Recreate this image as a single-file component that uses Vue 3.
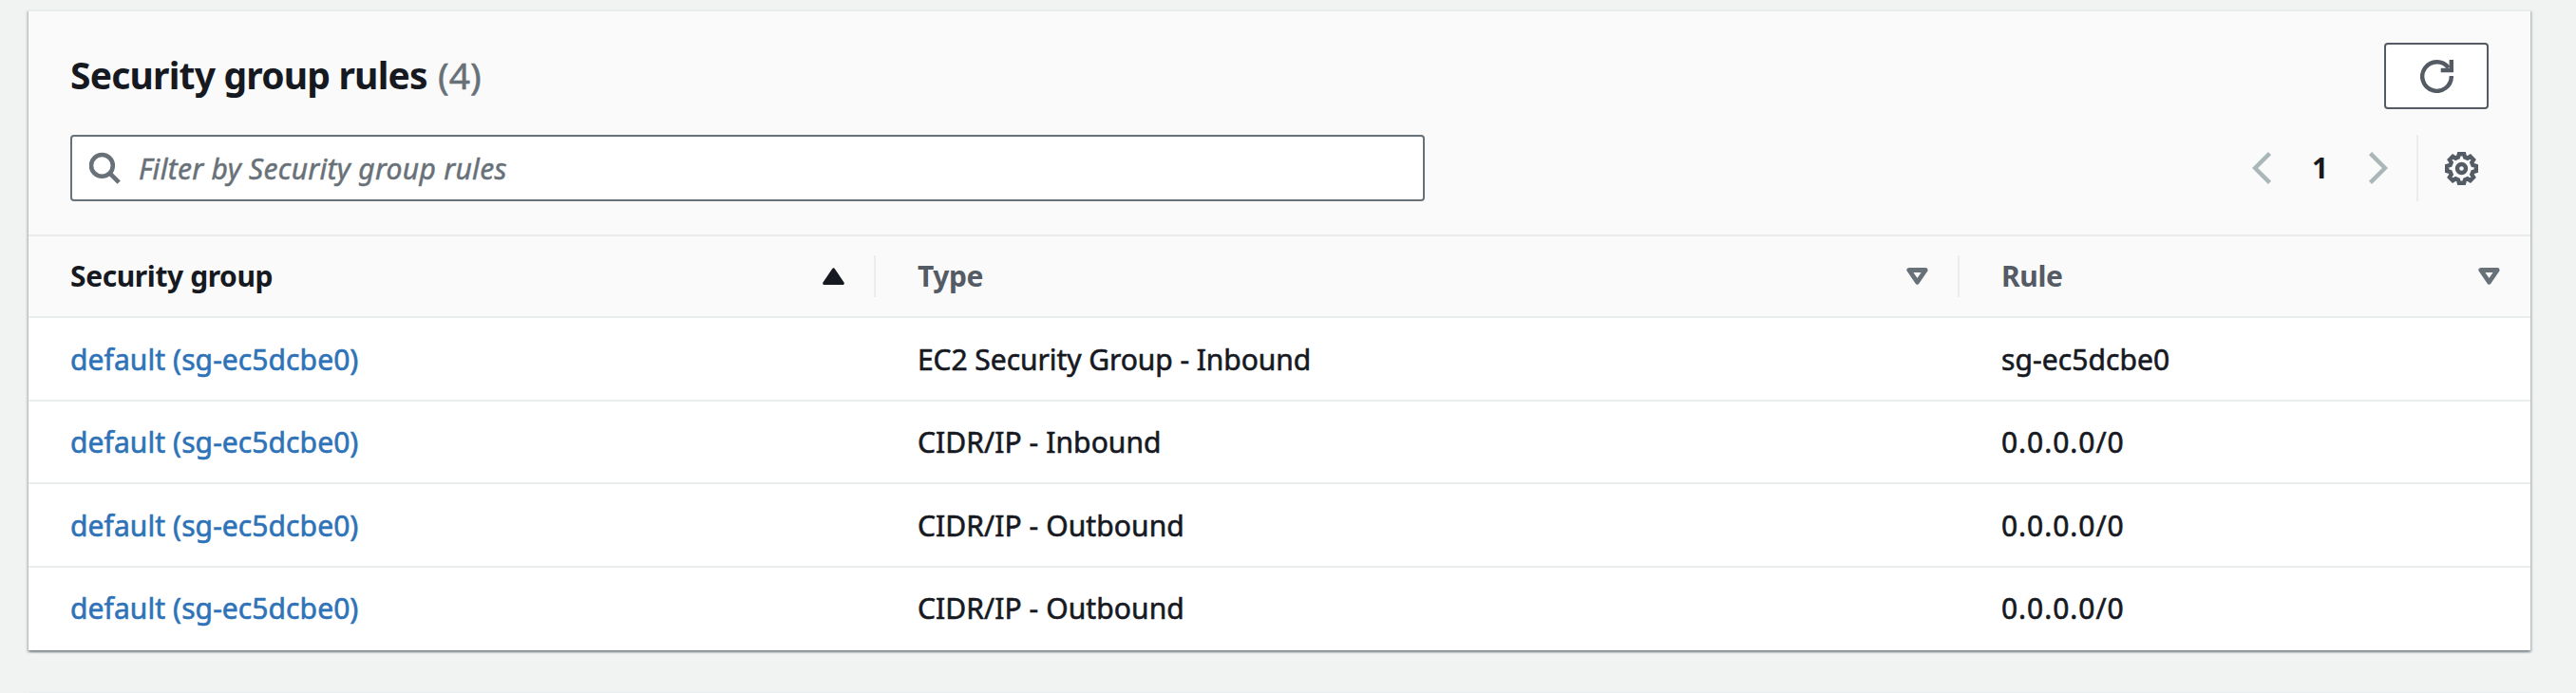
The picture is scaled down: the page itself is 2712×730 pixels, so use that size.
<script setup>
const columns = [
  { id: 'group', label: 'Security group', sorted: true },
  { id: 'type', label: 'Type', sorted: false },
  { id: 'rule', label: 'Rule', sorted: false },
]

const rules = [
  { group: 'default (sg-ec5dcbe0)', type: 'EC2 Security Group - Inbound', rule: 'sg-ec5dcbe0' },
  { group: 'default (sg-ec5dcbe0)', type: 'CIDR/IP - Inbound', rule: '0.0.0.0/0' },
  { group: 'default (sg-ec5dcbe0)', type: 'CIDR/IP - Outbound', rule: '0.0.0.0/0' },
  { group: 'default (sg-ec5dcbe0)', type: 'CIDR/IP - Outbound', rule: '0.0.0.0/0' },
]
</script>

<template>
  <main class="page">
    <section class="card">
      <header class="card-header">
        <div class="title-row">
          <h2 class="title">Security group rules <span class="counter">(4)</span></h2>
          <button class="refresh" type="button" aria-label="Refresh">
            <svg width="35" height="35" viewBox="0 0 35 35" fill="none" stroke="currentColor" stroke-width="4.4">
              <path d="M32.8 17A15.3 15.3 0 1 1 29.8 8.4" />
              <path d="M21.7 11H32.8V0" />
            </svg>
          </button>
        </div>
        <div class="tools-row">
          <label class="filter">
            <svg class="search-icon" width="34" height="34" viewBox="0 0 34 34" fill="none" stroke="currentColor" stroke-width="4.6">
              <circle cx="13.4" cy="14.4" r="11.4" />
              <path d="M21.2 22.2L31.2 32.2" />
            </svg>
            <span class="placeholder">Filter by Security group rules</span>
          </label>
          <nav class="pagination">
            <svg width="21" height="34" viewBox="0 0 21 34" fill="none" stroke="currentColor" stroke-width="4.4">
              <path d="M18.5 1.6L3.1 17L18.5 32.4" />
            </svg>
            <span class="page-number">1</span>
            <svg width="21" height="34" viewBox="0 0 21 34" fill="none" stroke="currentColor" stroke-width="4.4">
              <path d="M2.5 1.6L17.9 17L2.5 32.4" />
            </svg>
          </nav>
          <div class="settings">
            <svg width="35" height="35" viewBox="-17.5 -17.5 35 35" fill="none" stroke="currentColor" stroke-width="4.4" stroke-linejoin="miter">
              <path d="M-2.6 -15.3H2.6L3.6 -11.9L6.3 -10.8L9.2 -12.6L12.6 -9.2L10.8 -6.3L11.9 -3.6L15.3 -2.6V2.6L11.9 3.6L10.8 6.3L12.6 9.2L9.2 12.6L6.3 10.8L3.6 11.9L2.6 15.3H-2.6L-3.6 11.9L-6.3 10.8L-9.2 12.6L-12.6 9.2L-10.8 6.3L-11.9 3.6L-15.3 2.6V-2.6L-11.9 -3.6L-10.8 -6.3L-12.6 -9.2L-9.2 -12.6L-6.3 -10.8L-3.6 -11.9Z" />
              <circle r="4.5" />
            </svg>
          </div>
        </div>
      </header>

      <div class="grid head">
        <div v-for="c in columns" :key="c.id" class="head-cell" :class="{ sorted: c.sorted }">
          <span>{{ c.label }}</span>
          <svg v-if="c.sorted" width="23" height="18" viewBox="0 0 23 18" fill="currentColor" stroke="currentColor" stroke-width="3" stroke-linejoin="round">
            <path d="M11.5 1.8L21.3 16.4H1.7Z" />
          </svg>
          <svg v-else width="23" height="18" viewBox="0 0 23 18" fill="none" stroke="currentColor" stroke-width="4.8" stroke-linejoin="round">
            <path d="M2.8 2.5H20.2L11.5 15.2Z" />
          </svg>
        </div>
      </div>

      <div v-for="(r, i) in rules" :key="i" class="grid row">
        <div class="cell"><a class="link">{{ r.group }}</a></div>
        <div class="cell type" :class="{ wide: !r.type.includes('/') }">{{ r.type }}</div>
        <div class="cell" :class="{ address: r.rule.includes('/') }">{{ r.rule }}</div>
      </div>
    </section>
    <section class="next-card"></section>
  </main>
</template>

<style>
body {
  background: #f2f3f3;
}
</style>

<style scoped>
.page {
  box-sizing: border-box;
  height: 730px;
  padding: 10px 48px 0 30px;
  overflow: hidden;
  display: flex;
  flex-direction: column;
  background: #f1f3f3;
  color: #16191f;
  font-family: "Noto Sans", "Open Sans", sans-serif;
  font-size: 30px;
  line-height: 40px;
}

svg {
  display: block;
  flex: none;
}

.card {
  box-sizing: border-box;
  height: 675px;
  flex: none;
  background: #fff;
  border-top: 2px solid #eaeded;
  box-shadow:
    0 2px 2px rgba(0, 28, 36, 0.3),
    2px 2px 2px rgba(0, 28, 36, 0.15),
    -2px 2px 2px rgba(0, 28, 36, 0.15);
}

.next-card {
  flex: none;
  height: 20px;
  margin-top: 44px;
  background: #eaeded;
}

.card-header {
  box-sizing: border-box;
  height: 237px;
  padding: 33px 44px 0;
  background: #fafafa;
  border-bottom: 2px solid #eaeded;
}

.title-row {
  display: flex;
  justify-content: space-between;
  height: 70px;
}

.title {
  margin: 0;
  font-size: 39px;
  line-height: 67px;
  font-weight: 700;
  letter-spacing: -0.8px;
}

.counter {
  margin-left: 2px;
  font-weight: 400;
  letter-spacing: 0;
  color: #687078;
  -webkit-text-stroke: 0.5px currentColor;
}

.refresh {
  box-sizing: border-box;
  width: 110px;
  height: 70px;
  padding: 0;
  display: flex;
  align-items: center;
  justify-content: center;
  background: #fff;
  border: 2px solid #545b64;
  border-radius: 4px;
  color: #545b64;
}

.tools-row {
  display: flex;
  align-items: center;
  margin-top: 27px;
  height: 70px;
}

.filter {
  box-sizing: border-box;
  width: 1426px;
  height: 70px;
  padding-left: 18px;
  display: flex;
  align-items: center;
  background: #fff;
  border: 2px solid #687078;
  border-radius: 4px;
  color: #687078;
}

.placeholder {
  margin-left: 18px;
  padding-top: 2px;
  font-style: italic;
  letter-spacing: 0.3px;
  -webkit-text-stroke: 0.5px currentColor;
}

.pagination {
  display: flex;
  align-items: center;
  justify-content: space-between;
  width: 143px;
  margin-left: auto;
  color: #aab7b8;
}

.page-number {
  color: #16191f;
  font-weight: 700;
}

.settings {
  box-sizing: border-box;
  width: 76px;
  height: 70px;
  margin-left: 30px;
  padding-left: 28px;
  display: flex;
  align-items: center;
  border-left: 2px solid #eaeded;
  color: #545b64;
}

.grid {
  display: grid;
  grid-template-columns: 892px 1141px 1fr;
}

.head {
  box-sizing: border-box;
  height: 86px;
  align-items: center;
  background: #fafafa;
  border-bottom: 2px solid #eaeded;
}

.head-cell {
  box-sizing: border-box;
  height: 44px;
  padding: 0 31px 0 44px;
  display: flex;
  align-items: center;
  justify-content: space-between;
  border-right: 2px solid #eaeded;
  color: #687078;
  font-weight: 700;
  letter-spacing: -0.4px;
}

.head-cell span {
  color: #545b64;
}

.head-cell.sorted,
.head-cell.sorted span {
  color: #16191f;
}

.head-cell:last-child {
  border-right: 0;
  padding-right: 32px;
}

.row {
  box-sizing: border-box;
  height: 87.5px;
  padding-top: 2px;
  align-items: center;
  border-bottom: 2px solid #eaeded;
}

.row:last-child {
  border-bottom-color: transparent;
}

.cell {
  padding-left: 44px;
  letter-spacing: 0.08px;
  -webkit-text-stroke: 0.6px currentColor;
}

.cell.wide {
  letter-spacing: -0.06px;
}

.link {
  color: #2e73b8;
}

.address {
  letter-spacing: 0.95px;
}
</style>
